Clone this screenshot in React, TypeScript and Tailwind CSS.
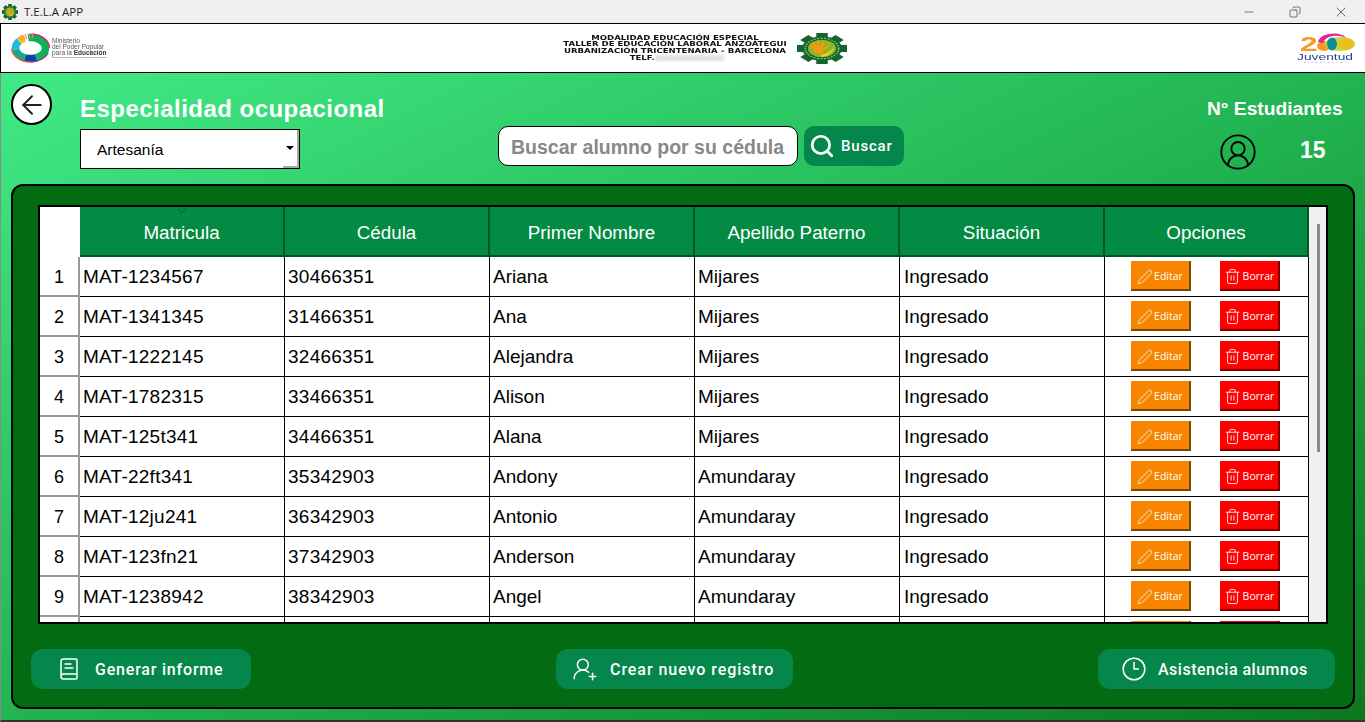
import { ArrowLeft, BookText, CircleUserRound, Clock3, Copy, Minus, Pen, Search, Trash2, UserRoundPlus, X } from 'lucide-react';

const alumnos = [
  ['MAT-1234567', '30466351', 'Ariana', 'Mijares', 'Ingresado'],
  ['MAT-1341345', '31466351', 'Ana', 'Mijares', 'Ingresado'],
  ['MAT-1222145', '32466351', 'Alejandra', 'Mijares', 'Ingresado'],
  ['MAT-1782315', '33466351', 'Alison', 'Mijares', 'Ingresado'],
  ['MAT-125t341', '34466351', 'Alana', 'Mijares', 'Ingresado'],
  ['MAT-22ft341', '35342903', 'Andony', 'Amundaray', 'Ingresado'],
  ['MAT-12ju241', '36342903', 'Antonio', 'Amundaray', 'Ingresado'],
  ['MAT-123fn21', '37342903', 'Anderson', 'Amundaray', 'Ingresado'],
  ['MAT-1238942', '38342903', 'Angel', 'Amundaray', 'Ingresado'],
  ['', '', '', '', ''],
];

const columnas = ['Matricula', 'Cédula', 'Primer Nombre', 'Apellido Paterno', 'Situación', 'Opciones'];

function GearLogo({ className }: { className: string }) {
  const dientes = [0, 45, 90, 135, 180, 225, 270, 315];
  return (
    <svg viewBox="0 0 48 48" preserveAspectRatio="none" className={className}>
      {dientes.map((r) => (
        <rect key={r} x="18.500" y="0" width="11" height="10" fill="#15652a" transform={`rotate(${r} 24 24)`} />
      ))}
      <circle cx="24" cy="24" r="19" fill="#15652a" />
      <circle cx="24" cy="24" r="16" fill="none" stroke="#9cc58a" strokeWidth="1.500" strokeDasharray="2 1.500" />
      <circle cx="24" cy="24" r="13.500" fill="#86b82c" />
      <g stroke="#f39a12" strokeWidth="2.600" strokeLinecap="round">
        <path d="M20 27L13 20" />
        <path d="M20 25L15 15" />
        <path d="M21 25L20 13" />
        <path d="M23 25L25 14" />
        <path d="M24 27L30 20" />
      </g>
      <circle cx="21" cy="27" r="5" fill="#f39a12" />
      <path d="M22 34c6-1 11-6 14-13-1 8-5 14-11 16z" fill="#f4d21a" />
    </svg>
  );
}

function MinisterioLogo() {
  return (
    <div className="flex items-center blur-[0.3px]">
      <svg viewBox="0 0 42 30" className="w-[42px] h-[30px] -ml-[1px]">
        <g fill="none" strokeWidth="7.500">
          <ellipse cx="20.500" cy="15" rx="15" ry="10.500" pathLength="100" stroke="#0cb35a" strokeDasharray="46 54" strokeDashoffset="28" />
          <ellipse cx="20.500" cy="15" rx="15" ry="10.500" pathLength="100" stroke="#0b44a8" strokeDasharray="14 86" strokeDashoffset="-18" />
          <ellipse cx="20.500" cy="15" rx="15" ry="10.500" pathLength="100" stroke="#17a98c" strokeDasharray="16 84" strokeDashoffset="-32" />
          <ellipse cx="20.500" cy="15" rx="15" ry="10.500" pathLength="100" stroke="#23b8d8" strokeDasharray="12 88" strokeDashoffset="-48" />
          <ellipse cx="20.500" cy="15" rx="15" ry="10.500" pathLength="100" stroke="#f6c711" strokeDasharray="8 92" strokeDashoffset="-60" />
        </g>
        <g fill="none" strokeWidth="1.300">
          <ellipse cx="20.500" cy="15" rx="19" ry="14" pathLength="100" stroke="#e0245e" strokeDasharray="24 76" strokeDashoffset="24" />
          <ellipse cx="20.500" cy="15" rx="19" ry="14" pathLength="100" stroke="#a62d9c" strokeDasharray="20 80" strokeDashoffset="-5" />
          <ellipse cx="20.500" cy="15" rx="19" ry="14" pathLength="100" stroke="#ef5a2a" strokeDasharray="24 76" strokeDashoffset="-25" />
        </g>
        <g stroke="#f58a6a" strokeWidth="1.100">
          <path d="M13 7L8 4" />
          <path d="M15 6L11 2" />
          <path d="M17 6L15 1" />
          <path d="M19.500 5.500L19 0" />
          <path d="M22 5.500L23 0" />
        </g>
      </svg>
      <div className="font-['Liberation_Sans',sans-serif] text-[6.5px] leading-[6px] text-[#555] border-b border-[#bbb] pb-[1px] whitespace-nowrap">
        <p>Ministerio</p>
        <p>del Poder Popular</p>
        <p>
          para la <b className="text-[#333]">Educación</b>
        </p>
      </div>
    </div>
  );
}

function JuventudLogo() {
  return (
    <svg viewBox="0 0 60 30" className="w-[60px] h-[30px] blur-[0.3px]">
      <ellipse cx="28" cy="13" rx="7" ry="5" fill="#f59a23" />
      <ellipse cx="44" cy="11" rx="15" ry="7" fill="#c3d93a" />
      <ellipse cx="50" cy="11" rx="8" ry="6" fill="#e9c020" />
      <ellipse cx="36" cy="11" rx="5" ry="6.500" fill="#0f8f93" />
      <path d="M22 9C24 -1 46 -2 50 5C42 1 30 2 27 10z" fill="#e3239a" />
      <text transform="translate(4 18) scale(1.5 1)" fontFamily="Liberation Sans" fontWeight="700" fontSize="21" fill="#f59a23">
        2
      </text>
      <text x="1" y="26.500" fontFamily="Liberation Sans" fontSize="8.500" textLength="56" lengthAdjust="spacingAndGlyphs" fill="#2b3d8f">
        Juventud
      </text>
      <text x="8" y="29.800" fontFamily="Liberation Sans" fontWeight="700" fontSize="2.300" textLength="46" fill="#8a8fa8">
        BICENTENARIA
      </text>
    </svg>
  );
}

function AccionGrande({ icon, label, ancho }: { icon: React.ReactNode; label: string; ancho: string }) {
  return (
    <button className={`${ancho} h-10 rounded-xl bg-[#05864a] text-white flex items-center font-['Roboto',sans-serif] font-medium text-[16px]`}>
      {icon}
      <span className="pt-[1px]">{label}</span>
    </button>
  );
}

// la fila 10 queda cortada por el scroll: solo asoma el borde del boton
function rotulo(n: number, texto: string) {
  return n < 9 ? texto : '';
}

export default function App() {
  return (
    <div className="w-[1365px] h-[722px] overflow-hidden flex flex-col font-['Liberation_Sans',sans-serif]">
      {/* barra de la ventana */}
      <div className="h-[23px] bg-[#f0f0f0] flex items-center pl-[2px]">
        <GearLogo className="w-4 h-4" />
        <span className="ml-[6px] text-[11.5px] text-[#222] font-['Open_Sans',sans-serif]">T.E.L.A APP</span>
        <div className="ml-auto flex items-center text-[#222]">
          <Minus size={14} strokeWidth={1} className="mr-[33px]" />
          <Copy size={12} strokeWidth={1.2} className="mr-[32px] -scale-x-100" />
          <X size={16} strokeWidth={1} className="mr-[16px]" />
        </div>
      </div>

      {/* membrete */}
      <div className="h-[50px] bg-white border border-black border-r-0 flex items-center">
        <div className="w-[562px] pl-[10px]">
          <MinisterioLogo />
        </div>
        <div className="w-[224px] scale-x-[1.26] text-center font-['DejaVu_Sans',sans-serif] font-bold text-[6.8px] leading-[6.6px] text-[#111] blur-[0.2px] whitespace-nowrap">
          <p>MODALIDAD EDUCACIÓN ESPECIAL</p>
          <p>TALLER DE EDUCACIÓN LABORAL ANZOÁTEGUI</p>
          <p>URBANIZACIÓN TRICENTENARIA – BARCELONA</p>
          <p className="flex pl-[76px]">
            TELF.
            <span className="w-[55px] h-[6px] bg-[#e3e3e3] blur-[1px]" />
          </p>
        </div>
        <GearLogo className="ml-[10px] w-[50px] h-[31px]" />
        <div className="ml-auto mr-[9px]">
          <JuventudLogo />
        </div>
      </div>

      {/* cuerpo */}
      <div className="flex-1 flex flex-col border-l border-l-[#8a8a8a] border-b-2 border-b-[#333] bg-linear-to-br from-[#41ea86] via-[#22b452] to-[#0c781e]">
        <div className="h-[111px] flex items-start">
          <button className="ml-[10px] mt-[11px] w-[41px] h-[41px] rounded-full bg-white border-2 border-black flex items-center justify-center text-[#222]">
            <ArrowLeft size={30} strokeWidth={1.5} />
          </button>
          <div className="ml-[28px] w-[418px] mt-[20px]">
            <h1 className="text-white font-bold text-[24px] tracking-[0.47px] leading-[32px] whitespace-nowrap">Especialidad ocupacional</h1>
            <div className="mt-[4px] w-[220px] h-10 bg-white border border-black flex">
              <span className="flex-1 pl-[16px] leading-[39px] text-[15.5px] text-black">Artesanía</span>
              <div className="w-[16px] flex items-center justify-center border-r-2 border-b-2 border-[#a8a8a8]">
                <span className="border-x-[4px] border-x-transparent border-t-[4px] border-t-black" />
              </div>
            </div>
          </div>
          <div className="mt-[53px] flex gap-[6px]">
            <div className="w-[300px] h-10 bg-white border border-black rounded-[10px] flex items-center pl-[12px] pt-[3px] text-[19.5px] font-bold text-[#888] whitespace-nowrap">
              Buscar alumno por su cédula
            </div>
            <button className="w-[100px] h-10 bg-[#05864a] rounded-[10px] flex items-center pl-[5px] gap-[6px] text-white font-['Roboto',sans-serif] font-medium text-[15px] tracking-[0.8px]">
              <Search size={26} strokeWidth={2.5} />
              Buscar
            </button>
          </div>
          <div className="ml-auto mr-[22px] w-[136px] mt-[25px]">
            <p className="text-white font-bold text-[19.2px] leading-[22px] whitespace-nowrap">N° Estudiantes</p>
            <div className="mt-[12px] ml-[11px] flex items-center text-black">
              <CircleUserRound size={40} strokeWidth={1.1} />
              <span className="ml-[42px] -mt-[4px] text-white font-bold text-[23px]">15</span>
            </div>
          </div>
        </div>

        <div className="ml-[10px] mr-[10px] h-[525px] bg-[#036b12] border-2 border-black rounded-xl px-[25px] pt-[19px] pb-[18px] flex flex-col">
          <div className="w-[1290px] h-[419px] border-2 border-black bg-white flex overflow-hidden">
            <div className="w-[1269px] shrink-0">
              <div className="flex h-[50px]">
                <div className="w-10 shrink-0 bg-white" />
                {columnas.map((c, i) => (
                  <div key={c} className={`relative ${i === 5 ? 'w-[204px]' : 'w-[205px]'} shrink-0 bg-[#038a43] border-r-2 border-b-2 border-[#04552b] flex items-center justify-center pt-[4px] text-white text-[18.8px]`}>
                    {i === 0 && (
                      <svg viewBox="0 0 8 4" className="absolute top-[2px] left-[98px] w-2 h-1">
                        <path d="M0 0l4 4 4-4" fill="none" stroke="#04552b" strokeWidth="1" />
                      </svg>
                    )}
                    {c}
                  </div>
                ))}
              </div>
              {alumnos.map((fila, n) => (
                <div key={n} className="flex h-10 text-black text-[19px]">
                  <div className="w-10 shrink-0 border-r-2 border-b-2 border-[#9a9a9a] flex items-center justify-center pt-[3px] text-[18px]">{n < 9 ? n + 1 : ''}</div>
                  {fila.map((dato, i) => (
                    <div key={i} className={`w-[205px] shrink-0 border-r border-b border-black leading-[39px] ${i === 4 ? 'pl-[4px]' : 'pl-[3px]'} ${i < 2 ? 'tracking-[0.25px]' : ''}`}>
                      {dato}
                    </div>
                  ))}
                  <div className="w-[204px] shrink-0 border-r border-b border-black pl-[26px] pt-1 flex gap-[29px] items-start font-['Open_Sans',sans-serif] text-[10.5px] text-white">
                    <button className="w-[60px] h-[30px] pt-[3px] bg-[#f78500] border-b-2 border-r-2 border-[#7d4500] flex items-center justify-center gap-[1px]">
                      <Pen size={16} strokeWidth={1.2} />
                      {rotulo(n, 'Editar')}
                    </button>
                    <button className="w-[60px] h-[30px] pt-[3px] bg-[#ff0000] border-b-2 border-r-2 border-[#860000] flex items-center justify-center gap-[2px]">
                      <Trash2 size={17} strokeWidth={1.2} />
                      {rotulo(n, 'Borrar')}
                    </button>
                  </div>
                </div>
              ))}
            </div>
            <div className="flex-1 bg-[#f0f0f0] pt-[17px] pl-[8px]">
              <div className="w-[3px] h-[228px] bg-[#8a8a8a]" />
            </div>
          </div>

          <div className="mt-[25px] -mx-[7px] flex justify-between">
            <AccionGrande ancho="w-[220px] pl-[26px] gap-[14px] tracking-[0.8px]" icon={<BookText size={24} strokeWidth={1.5} />} label="Generar informe" />
            <AccionGrande ancho="w-[237px] pl-[16px] gap-[12px] tracking-[0.95px]" icon={<UserRoundPlus size={26} strokeWidth={1.4} />} label="Crear nuevo registro" />
            <AccionGrande ancho="w-[237px] pl-[23px] gap-[11px] tracking-[0.5px]" icon={<Clock3 size={26} strokeWidth={1.4} />} label="Asistencia alumnos" />
          </div>
        </div>
      </div>
    </div>
  );
}
